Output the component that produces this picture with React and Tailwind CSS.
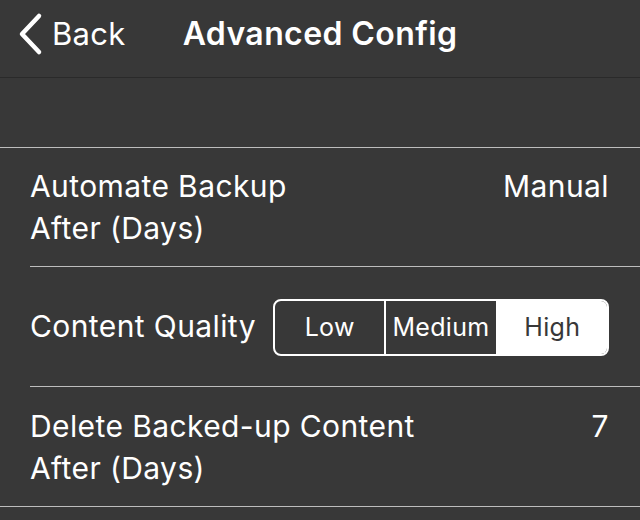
import React, { useState } from "react";

const font = { fontFamily: "Inter, 'Noto Sans', sans-serif" };

function Segmented({ options, value, onChange }) {
  return (
    <div className="flex h-[57px] w-[336px] mt-[2px] rounded-[8px] border-2 border-white overflow-hidden">
      {options.map((opt, i) => {
        const active = opt === value;
        return (
          <button
            key={opt}
            onClick={() => onChange(opt)}
            className={
              "flex-1 flex items-center justify-center text-[25px] tracking-[0.3px] " +
              (i > 0 ? "border-l-2 border-white " : "") +
              (active ? "bg-white text-[#383838]" : "text-white")
            }
          >
            {opt}
          </button>
        );
      })}
    </div>
  );
}

function Row({ children, last, first }) {
  return (
    <div className="pl-[30px]">
      <div
        className={
          "flex items-center pr-[31px] " +
          (first || last ? "h-[119px] " : "h-[120px] ") +
          (last ? "" : "border-b border-[#bdbdbd]")
        }
      >
        {children}
      </div>
    </div>
  );
}

export default function App() {
  const [quality, setQuality] = useState("High");

  return (
    <div className="w-[640px] h-[520px] bg-[#383838] text-white overflow-hidden" style={font}>
      {/* nav bar */}
      <div className="h-[78px] pb-[10px] flex items-center border-b border-[#2a2a2a] relative">
        <div className="flex items-center pl-[17px] gap-[9px]">
          <svg width="26" height="44" viewBox="0 0 26 44">
            <path d="M22 4 L5 22 L22 40" fill="none" stroke="white" strokeWidth="4.5" strokeLinecap="round" strokeLinejoin="round" />
          </svg>
          <span className="text-[31px] leading-none tracking-[0.3px]">Back</span>
        </div>
        <div className="absolute left-0 right-0 text-center text-[32px] font-semibold leading-none tracking-[0.4px] pointer-events-none">
          Advanced Config
        </div>
      </div>

      <div className="h-[69px]" />

      <div className="border-t border-b border-[#bdbdbd]">
        <Row first>
          <div className="flex-1 text-[30px] leading-[42px] tracking-[0.4px] self-start pt-[17px]">
            Automate Backup
            <br />
            After (Days)
          </div>
          <div className="text-[30px] leading-[42px] tracking-[0.4px] self-start pt-[17px]">Manual</div>
        </Row>
        <Row>
          <div className="flex-1 text-[30px] tracking-[0.4px]">Content Quality</div>
          <Segmented options={["Low", "Medium", "High"]} value={quality} onChange={setQuality} />
        </Row>
        <Row last>
          <div className="flex-1 text-[30px] leading-[42px] tracking-[0.4px] self-start pt-[18px]">
            Delete Backed-up Content
            <br />
            After (Days)
          </div>
          <div className="text-[30px] leading-[42px] tracking-[0.4px] self-start pt-[18px]">7</div>
        </Row>
      </div>
    </div>
  );
}
